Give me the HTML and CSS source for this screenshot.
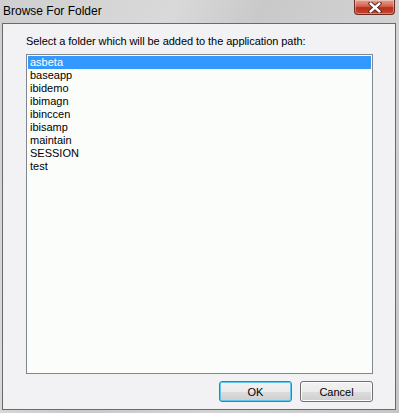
FILE: index.html
```html
<!DOCTYPE html>
<html>
<head>
<meta charset="utf-8">
<link rel="stylesheet" href="styles.css">
</head>
<body>
<div class="window">
  <div class="titlebar">
    <span class="title">Browse For Folder</span>
    <div class="close">
      <svg width="16" height="11" viewBox="0 0 16 11">
        <path d="M3.5 1.5 L12.5 9.5 M12.5 1.5 L3.5 9.5" stroke="#4a1a14" stroke-width="4.2" fill="none" stroke-linecap="round"/>
        <path d="M3.5 1.5 L12.5 9.5 M12.5 1.5 L3.5 9.5" stroke="#ffffff" stroke-width="2.4" fill="none" stroke-linecap="round"/>
      </svg>
    </div>
  </div>
  <div class="client">
    <div class="label">Select a folder which will be added to the application path:</div>
    <div class="listbox">
      <div class="item selected">asbeta</div>
      <div class="item">baseapp</div>
      <div class="item">ibidemo</div>
      <div class="item">ibimagn</div>
      <div class="item">ibinccen</div>
      <div class="item">ibisamp</div>
      <div class="item">maintain</div>
      <div class="item">SESSION</div>
      <div class="item">test</div>
    </div>
    <div class="buttons">
      <button class="btn default">OK</button>
      <button class="btn">Cancel</button>
    </div>
  </div>
</div>
</body>
</html>
```
FILE: styles.css
```css
html, body {
  margin: 0;
  padding: 0;
}
body {
  width: 399px;
  height: 413px;
  overflow: hidden;
  font-family: "Liberation Sans", Arial, sans-serif;
}
.window {
  width: 399px;
  height: 413px;
  display: flex;
  flex-direction: column;
  background: linear-gradient(115deg, #cfcfcf 0%, #d9d9d9 30%, #c9c9c9 45%, #d3d3d3 70%, #c6c6c6 100%);
  box-sizing: border-box;
}
.titlebar {
  height: 23px;
  display: flex;
  justify-content: space-between;
  align-items: flex-start;
  flex-shrink: 0;
}
.title {
  font-size: 12px;
  color: #000;
  padding: 4px 0 0 3px;
  line-height: 14px;
}
.close {
  width: 41px;
  height: 15px;
  margin-right: 4px;
  box-sizing: border-box;
  border: 1px solid #6b2a22;
  border-top: none;
  border-radius: 0 0 4px 4px;
  background: linear-gradient(#e5a08f 0%, #d4634d 45%, #b8301b 55%, #c9452c 100%);
  display: flex;
  align-items: center;
  justify-content: center;
  box-shadow: inset 0 0 0 1px rgba(255,255,255,0.35);
}
.client {
  flex: 1;
  margin: 0 3px 3px 2px;
  border: 1px solid #6a6a6a;
  background: #f2f1f4;
  display: flex;
  flex-direction: column;
  padding: 0 22px 5px 23px;
}
.label {
  font-size: 11px;
  line-height: 13px;
  color: #000;
  padding-top: 11px;
  height: 19px;
  letter-spacing: -0.05px;
}
.listbox {
  border: 1px solid #82868f;
  background: #fbfdfb;
  padding: 1px;
  height: 320px;
  box-sizing: border-box;
  font-size: 11px;
}
.item {
  height: 13px;
  line-height: 13px;
  padding-left: 2px;
  color: #000;
}
.item.selected {
  background: #3399ff;
  color: #fff;
}
.buttons {
  display: flex;
  justify-content: flex-end;
  gap: 8px;
  margin-top: 7px;
}
.btn {
  width: 73px;
  height: 21px;
  box-sizing: border-box;
  border: 1px solid #707070;
  border-radius: 3px;
  background: linear-gradient(#f2f2f2 0%, #ebebeb 50%, #dddddd 51%, #cfcfcf 100%);
  font-family: "Liberation Sans", Arial, sans-serif;
  font-size: 11px;
  color: #000;
  padding: 0;
  box-shadow: inset 0 0 0 1px #fbfbfb;
}
.btn.default {
  border-color: #3c7fb1;
  box-shadow: inset 0 0 0 1px #62c6ee;
}
```
